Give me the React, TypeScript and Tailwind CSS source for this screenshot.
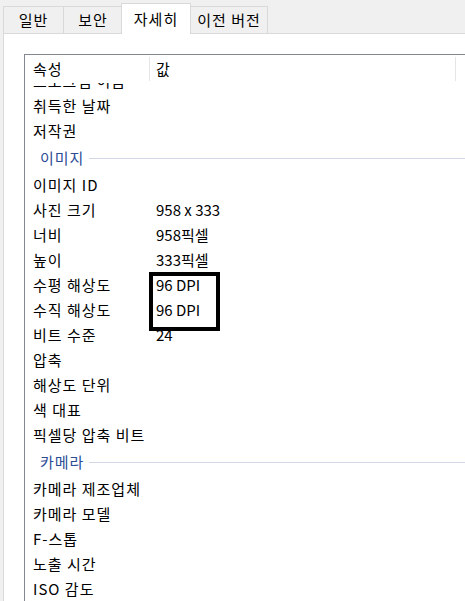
const font = { fontFamily: '"Noto Sans CJK KR", "Noto Sans", sans-serif' }

type Row = { label: string; value?: string; group?: boolean }

const rows: Row[] = [
  { label: "프로그램 이름" },
  { label: "취득한 날짜" },
  { label: "저작권" },
  { label: "이미지", group: true },
  { label: "이미지 ID" },
  { label: "사진 크기", value: "958 x 333" },
  { label: "너비", value: "958픽셀" },
  { label: "높이", value: "333픽셀" },
  { label: "수평 해상도", value: "96 DPI" },
  { label: "수직 해상도", value: "96 DPI" },
  { label: "비트 수준", value: "24" },
  { label: "압축" },
  { label: "해상도 단위" },
  { label: "색 대표" },
  { label: "픽셀당 압축 비트" },
  { label: "카메라", group: true },
  { label: "카메라 제조업체" },
  { label: "카메라 모델" },
  { label: "F-스톱" },
  { label: "노출 시간" },
  { label: "ISO 감도" },
  { label: "노출 프로그램" },
]

function Tab({ label, active, width }: { label: string; active?: boolean; width: string }) {
  if (active) {
    return (
      <div className={`${width} relative z-10 -mb-px -mx-px h-[31px] bg-white border border-b-0 border-[#d9d9d9] flex items-start justify-center pt-[4px] text-[15px] tracking-[1px] text-black`}>
        {label}
      </div>
    )
  }
  return (
    <div className={`${width} h-[27px] bg-[#f0f0f0] border border-b-0 border-[#d9d9d9] -mr-px flex items-center justify-center text-[15px] tracking-[1px] text-black`}>
      {label}
    </div>
  )
}

export default function App() {
  return (
    <div className="w-[465px] h-[601px] bg-[#f0f0f0] overflow-hidden flex flex-col" style={font}>
      <div className="flex items-end h-[33px] pl-[3px] shrink-0">
        <Tab label="일반" width="w-[61px]" />
        <Tab label="보안" width="w-[60px]" />
        <Tab label="자세히" active width="w-[70px]" />
        <Tab label="이전 버전" width="w-[78px]" />
      </div>
      <div className="flex-1 ml-[3px] bg-white border-l border-t border-[#d9d9d9] pl-[20px] pt-[20px] min-h-0">
        <div className="relative h-full border-l border-t border-[#828790] flex flex-col overflow-hidden">
          <div className="flex h-[28px] shrink-0 bg-white relative z-10 text-[15px] text-black">
            <div className="w-[125px] pl-[8px] flex items-center border-r border-[#e5e5e5] my-[2px] tracking-[1px]">속성</div>
            <div className="w-[306px] pl-[6px] flex items-center border-r border-[#e5e5e5] my-[2px]">값</div>
          </div>
          <div className="flex-1 overflow-hidden">
            <div className="-mt-[14px]">
              {rows.map((r, i) =>
                r.group ? (
                  <div key={i} className="h-[29px] flex items-center pl-[15px] pr-0 text-[15px] text-[#2c4c96]">
                    <span className="tracking-[1px]">{r.label}</span>
                    <div className="flex-1 ml-[5px] h-px bg-[#d0d8e8]" />
                  </div>
                ) : (
                  <div key={i} className="h-[25px] flex items-center text-[15px] text-black">
                    <div className="w-[124px] pl-[8px] whitespace-nowrap tracking-[1px]">{r.label}</div>
                    <div className="pl-[7px] whitespace-nowrap">{r.value}</div>
                  </div>
                )
              )}
            </div>
          </div>
          <div className="absolute left-[124px] top-[217px] w-[71px] h-[59px] border-4 border-black z-20" />
        </div>
      </div>
    </div>
  )
}
